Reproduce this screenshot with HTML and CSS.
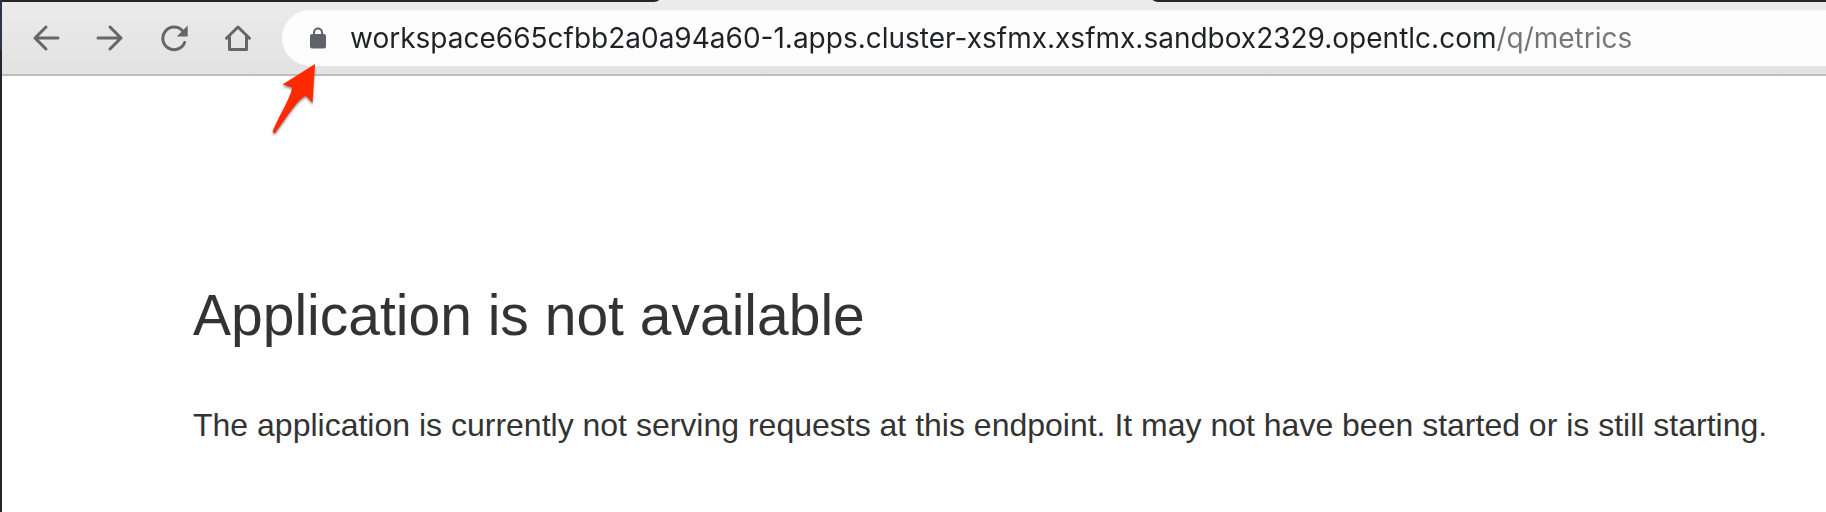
FILE: index.html
```html
<!DOCTYPE html>
<html lang="en">
<head>
<meta charset="utf-8">
<title>Application is not available</title>
<link rel="stylesheet" href="styles.css">
</head>
<body>
<div class="window">
  <div class="tabstrip">
    <div class="tabs-before"></div>
    <div class="tab-active"></div>
    <div class="tabs-after"></div>
  </div>
  <header class="toolbar">
    <nav class="nav-buttons" aria-label="Browser navigation">
      <button class="nav-button" type="button" aria-label="Back">
        <svg class="nav-icon" viewBox="0 0 28 28"><path class="line" d="M26 14H3M14 3L3 14l11 11"/></svg>
      </button>
      <button class="nav-button" type="button" aria-label="Forward">
        <svg class="nav-icon" viewBox="0 0 28 28"><path class="line" d="M2 14h23M14 3l11 11-11 11"/></svg>
      </button>
      <button class="nav-button" type="button" aria-label="Reload">
        <svg class="nav-icon" viewBox="0 0 28 28"><path class="line" d="M24.6 18.5A11.3 11.3 0 1 1 22.5 6.800"/><path class="solid" d="M27.700 1.500v11H16.700z"/></svg>
      </button>
      <button class="nav-button" type="button" aria-label="Home">
        <svg class="nav-icon" viewBox="0 0 28 28"><path class="line" d="M2.500 14.300L14 3l11.500 11.300M5.500 12v13.500h17V12"/></svg>
      </button>
    </nav>
    <div class="omnibox">
      <svg class="lock" viewBox="0 0 16 22"><rect class="lock-body" y="7" width="16" height="14.500" rx="2"/><path class="shackle" d="M4 8V5.500a4 4 0 0 1 8 0V8"/></svg>
      <input class="url" type="text" aria-label="Address" spellcheck="false" value="workspace665cfbb2a0a94a60-1.apps.cluster-xsfmx.xsfmx.sandbox2329.opentlc.com/q/metrics">
      <svg class="pointer" viewBox="0 0 48 76"><path d="M43 2L10.500 22.500 20 25.500C20 33 7 54 1 68.500c-1 2 1.500 3.500 3 1.500C14 56 27 35.500 34 34l6.500 7z"/></svg>
    </div>
  </header>
  <main class="page">
    <h1 class="title">Application is not available</h1>
    <p class="message">The application is currently not serving requests at this endpoint. It may not have been started or is still starting.</p>
  </main>
</div>
</body>
</html>
```
FILE: styles.css
```css
* {
  box-sizing: border-box;
}

body {
  margin: 0;
  background: #fff;
}

.window {
  min-height: 100vh;
  padding-left: 2px;
  background: linear-gradient(#2f3548 50px, #20262d 50px) left / 2px 100% no-repeat;
}

.tabstrip {
  display: flex;
  height: 2px;
  background: #ebebeb;
}

.tabs-before,
.tabs-after {
  background: #242629;
}

.tabs-before {
  flex: 658;
  border-bottom-right-radius: 8px 2px;
}

.tab-active {
  flex: 494;
}

.tabs-after {
  flex: 674;
  border-bottom-left-radius: 8px 2px;
}

.toolbar {
  display: flex;
  align-items: center;
  gap: 12px;
  padding: 8px 0 8px 12px;
  border-bottom: 2px solid #bdbdbd;
  background: linear-gradient(#ebebeb, #e2e2e2);
}

.nav-buttons {
  display: flex;
}

.nav-button {
  display: flex;
  align-items: center;
  justify-content: center;
  width: 64px;
  height: 56px;
  padding: 0;
  border: 0;
  background: none;
}

.nav-icon {
  width: 28px;
  height: 28px;
}

.line {
  fill: none;
  stroke: #666;
  stroke-width: 3;
  stroke-linecap: round;
  stroke-linejoin: round;
}

.solid {
  fill: #666;
}

.omnibox {
  position: relative;
  display: flex;
  flex: 1;
  align-items: center;
  gap: 24px;
  min-width: 0;
  height: 56px;
  padding-left: 28px;
  border-radius: 28px 0 0 28px;
  background: #fdfdfd;
}

.lock {
  flex: none;
  width: 16px;
  height: 22px;
}

.lock-body {
  fill: #5f6368;
}

.shackle {
  fill: none;
  stroke: #5f6368;
  stroke-width: 2;
}

.url {
  flex: 1;
  min-width: 0;
  height: 56px;
  padding: 0;
  border: 0;
  outline: 0;
  color: transparent;
  caret-color: #202124;
  background: linear-gradient(90deg, #202124 1145px, #757575 1145px);
  background-clip: text;
  font-family: Inter, Roboto, sans-serif;
  font-size: 28px;
}

.pointer {
  position: absolute;
  top: 52px;
  left: -10px;
  width: 48px;
  height: 76px;
  fill: #ff2a00;
  filter: drop-shadow(0 2px 1px #0006);
  pointer-events: none;
}

.page {
  padding: 207px 24px 64px 191px;
  color: #333;
  font-family: "Liberation Sans", Arial, sans-serif;
}

.title {
  margin: 0 0 56px;
  font-size: 57px;
  font-weight: 400;
  line-height: 64px;
}

.message {
  margin: 0;
  font-size: 32px;
  line-height: 44px;
}
```
